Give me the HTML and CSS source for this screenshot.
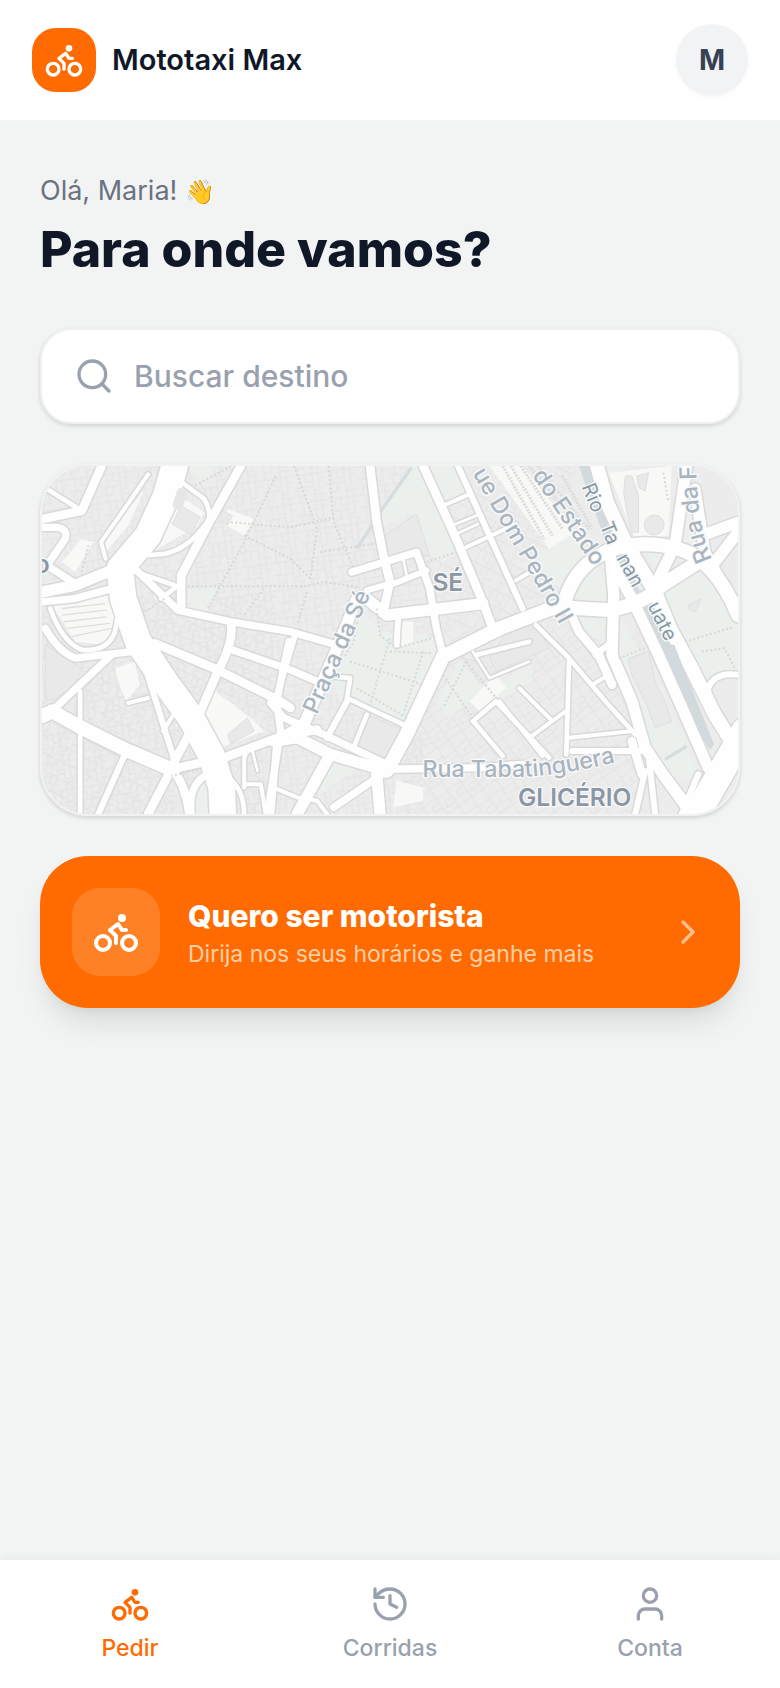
FILE: index.html
```html
<!DOCTYPE html>
<html lang="pt-BR">
<head>
<meta charset="utf-8">
<meta name="viewport" content="width=device-width, initial-scale=1">
<title>Mototaxi Max</title>
<link rel="stylesheet" href="styles.css">
</head>
<body>
<svg class="defs" aria-hidden="true">
  <symbol id="bike" viewBox="0 0 24 24"><circle cx="18.5" cy="17.5" r="3.5"/><circle cx="5.5" cy="17.5" r="3.5"/><circle cx="15" cy="5" r="1"/><path d="M12 17.5V14l-3-3 4-3 2 3h2"/></symbol>
</svg>
<div class="app">
  <header class="topbar">
    <a class="brand" href="#">
      <span class="brand-mark"><svg class="icon"><use href="#bike"/></svg></span>
      <span class="brand-name">Mototaxi Max</span>
    </a>
    <button class="avatar" type="button" aria-label="Perfil de Maria">M</button>
  </header>

  <main class="content">
    <div class="intro">
      <p class="greeting">Olá, Maria! <span class="wave">👋</span></p>
      <h1 class="title">Para onde vamos?</h1>
    </div>

    <label class="search">
      <svg class="icon" viewBox="0 0 24 24" aria-hidden="true"><circle cx="11" cy="11" r="8"/><path d="m21 21-4.3-4.3"/></svg>
      <input class="search-input" type="text" placeholder="Buscar destino" aria-label="Buscar destino">
    </label>

    <div class="map">
      <svg class="map-canvas" viewBox="30 30 2100 1050" preserveAspectRatio="xMidYMid slice" role="img" aria-label="Mapa do centro">
        <defs>
          <pattern id="lots" width="96" height="84" patternUnits="userSpaceOnUse" patternTransform="rotate(-8)">
            <path class="lot" d="M0 2H96M0 40H60V84M22 2V40M40 2V26H60M60 2V40M78 2V54H60M96 20H78M14 40V84M36 40V66H14M60 66H96M80 66V84"/>
          </pattern>
          <pattern id="lots-b" width="88" height="92" patternUnits="userSpaceOnUse" patternTransform="rotate(27)">
            <path class="lot" d="M0 2H88M0 46H88M16 2V46M34 2V30H52V2M52 30V46M70 2V46M24 46V92M24 68H44V46M62 46V92M62 76H88"/>
          </pattern>
          <pattern id="lots-c" width="90" height="90" patternUnits="userSpaceOnUse" patternTransform="rotate(55)">
            <path class="lot" d="M0 2H90M0 44H90M20 2V44M38 2V28H56M56 2V44M74 2V44M14 44V90M32 44V70H50V44M50 70V90M72 44V90"/>
          </pattern>
          <path id="line-tabatinguera" d="M1178 968H1470Q1620 965 1850 900"/>
          <path id="line-rua" d="M2052 312Q1998 200 2004 -60"/>
          <path id="line-praca" d="M860 782L1020 420"/>
          <g id="roads">
            <path class="w8" d="M1120 310L1130 360M1265 210L1340 180M1270 240L1345 205M1330 590L1380 670L1500 620M660 870L680 950"/>
            <path class="w12" d="M350 55L275 165L208 260L222 310M1240 150L1320 115M1310 275L1460 205M1460 375L1520 340M440 760L395 830M640 1000V910Q650 880 690 870M640 990H690L705 1080M740 1005L800 1030L860 1040L890 1080M1610 770L1500 850M1470 700L1570 800M1620 850L1810 830M1410 740L1540 905M1740 660L1690 690M290 745L350 730"/>
            <path class="w14" d="M30 90L150 165M440 70L520 130Q550 190 520 210Q470 280 400 295L340 300M300 345L430 390M440 390L390 430M145 710V1080M55 460Q90 560 150 585Q230 590 250 530L270 430M580 960Q640 1000 640 1080M910 665L960 670L950 730L1130 815M1010 780L970 880M1330 800L1400 740L1560 910M1335 805L1420 905M1520 510L1620 610L1730 740L1820 840M1620 620L1612 900M1340 600L1500 560M45 640"/>
            <path class="w18" d="M330 600L380 760L430 920M280 900L200 1080M1285 30L1380 240L1480 460M1105 480L1100 570M790 550L740 720M950 740L890 850M1080 390L1190 345M1010 405L1080 385M1630 890H1840M2040 760V700Q2060 650 2130 660M1700 600L1750 560M2010 960L1960 1080M1860 900L1880 1080M1850 950L1820 1080"/>
            <path class="w22" d="M30 215H75Q110 220 100 250L45 330L130 385M40 520Q80 590 130 610L300 590M240 600L70 760M310 340L440 465L600 500L780 530L920 570M590 580L780 645L860 680M775 560L738 740L750 830L710 1080M480 1080Q470 990 530 960M720 745L760 790L880 840L1070 930M740 850L720 1080M1070 950L910 1060M965 350L1160 290L1200 400L1220 520L1240 600M1070 945L1360 940L1480 930M30 440L130 430L240 400"/>
            <path class="w26" d="M210 30L150 165L30 190M630 30L540 190L450 360V460M370 565L560 645L740 735L780 760M600 505Q610 560 560 650L500 790L430 920M420 945L350 1080M420 945Q460 980 475 1080M420 945L580 910L740 850L860 825M1020 30L1040 200L1060 300L1080 380L1060 470M1180 30L1280 250L1360 440L1390 520M1610 440L1650 530L1710 600L1750 690M1900 950L2000 1080M1810 860L1840 960"/>
            <path class="w34" d="M30 410L130 390L240 345M1010 430L1070 480L1360 445M980 430L920 580L820 810L740 860M730 860L800 850L900 900L1070 950M900 900L800 1080M1040 960L1050 1080M1975 30L1940 270L1870 410M2000 100L2030 290L2090 400M2060 320L2130 230M2020 240L2130 200M1740 300L1810 430L1890 600L1970 780L2040 940M1745 300L1755 420L1750 600L1810 740L1850 880L1910 970L1990 1080"/>
            <path class="w42" d="M30 785L60 770L150 820L280 885L420 945M1070 950L1130 840L1240 605L1410 520L1580 455L1740 465Q1840 450 1900 390L2010 320M1610 430Q1640 330 1740 285Q1840 250 1950 280Q2060 310 2130 480M1705 30L1735 140L1790 260L1880 410L1925 520L1990 640L2060 780L2110 860"/>
            <path class="w80" d="M430 30L405 120L350 240L265 340L275 430L320 560L400 680L480 790L540 900L572 1000L576 1090M2150 830L2000 1090"/>
          </g>
        </defs>
        <rect class="land" x="30" y="30" width="2100" height="1050"/>
        <rect x="30" y="30" width="700" height="1050" fill="url(#lots)"/>
        <path fill="url(#lots-b)" d="M30 420H730V1080H30ZM1180 30H1640V520H1180Z"/>
        <path fill="url(#lots)" d="M730 30H1180V1080H730Z"/>
        <path fill="url(#lots-c)" d="M1180 520H1850V1080H1100Z"/>

        <path class="park" d="M1170 30L1310 280L1240 320L1180 290L1150 175L1060 210L1050 170L1150 30ZM1190 30H1290L1310 120L1240 140ZM970 450L1060 530L1220 545L1240 600L1130 810L930 730L900 660ZM465 30H560L520 90ZM465 400H560L530 465H475ZM1370 700L1510 630V680L1410 735ZM1290 620L1370 700L1260 790L1220 740ZM900 910L1000 930L910 990L860 1030ZM500 970L540 950V1080H490ZM1470 330L1640 230L1700 280L1620 410ZM1630 430L1700 330L1740 400V450ZM1770 480L1900 700L2020 980L1900 960L1760 640ZM1900 420L2010 340L2130 480V640L2040 680L1960 560ZM1940 270L1980 60L2010 290ZM1850 285L1920 300L1880 350ZM1650 490H1730V550Q1680 560 1650 490ZM1705 30H1800L1740 60Z"/>
        <path class="pale" d="M150 250L185 260L130 350L90 320ZM430 110L520 170L500 210L360 290ZM590 160L670 190L640 240L570 200ZM540 700L660 790L700 830L570 880L520 780ZM250 640L310 620L325 690L285 740L270 710ZM60 450L240 420L255 520L220 570L130 560ZM340 100L290 210L220 290L225 240ZM1380 30H1480L1640 230L1560 280ZM1740 50L1930 30L1920 240L1820 250ZM1100 980L1180 1000V1040L1090 1060ZM1320 740L1400 660L1430 700L1350 770ZM1110 500H1150V560L1110 575Z"/>
        <path class="building" d="M450 150L508 185L478 236L422 205ZM575 165L605 180L590 208L565 195ZM590 840L650 790L670 830L600 868ZM1065 240L1160 175L1200 300L1070 300ZM1010 780L1130 830L1060 915L980 880ZM1300 610L1360 625L1385 670L1350 685ZM1790 60H1810L1830 120V230H1810L1795 170L1785 110ZM1825 60L1860 50L1850 105L1830 95ZM1800 610L1860 590L1880 680L1910 740L1930 800L1880 820L1850 740L1810 660ZM1980 450L2020 430L2000 470L1985 465ZM1440 520L1520 500L1560 580L1400 650L1380 610ZM40 570L150 640L130 690L60 740L40 730Z"/>
        <circle class="building" cx="1877" cy="208" r="30"/>
        <path class="rail" d="M1420 30L1545 250M1445 30L1570 240M1475 30L1600 220M1500 30L1640 200M1525 30L1680 220M1600 60L1690 220"/>
        <path class="steps" d="M90 460L220 445M90 480L225 465M95 500L225 485M105 520L235 505M120 545L240 520"/>
        <path class="water" d="M1650 30H1690L1770 250L1830 400L1920 560L2058 870L2045 885L2010 830L1900 590L1790 380L1720 230Z"/>
        <path class="canal" d="M1145 35L1050 170L980 280M1910 915L1975 875"/>

        <use class="casing" href="#roads"/>
        <use class="surface" href="#roads"/>
        <path class="water" d="M1915 565L1938 570L2058 870L2045 885L2010 830L1990 780Z"/>
        <rect class="deck" x="430" y="95" width="32" height="68" rx="14" transform="rotate(18 446 130)"/>

        <path class="trail" d="M735 60L640 260L530 460M600 200L780 215L910 185M470 393H820L880 380L980 395M640 240L780 310L840 370M790 30L860 220L840 370M895 30L910 200L970 340M870 290L1030 265M700 400L640 480M830 410L800 510M990 450L970 560L940 610M1040 460L1050 540L1100 580L1220 545M960 620L1180 690M1080 550L1020 750M1180 590L1120 780M980 700L1130 790M1080 590L1210 595M1190 320L1280 290M1240 660L1330 790M1310 620L1240 760M1310 620L1400 730M150 350L170 270M1770 610L1860 575M1970 560L2120 515M2020 590L2090 580L2120 640M1905 50L1920 140M600 30L490 90M340 470L400 430M500 945L420 965"/>
        <g class="street-label">
          <text><textPath href="#line-praca">Praça da Sé</textPath></text>
          <text><textPath href="#line-tabatinguera">Rua Tabatinguera</textPath></text>
          <text transform="translate(1328 52) rotate(60)">ue Dom Pedro II</text>
          <text transform="translate(1508 58) rotate(56)">do Estado</text>
          <text><textPath href="#line-rua">Rua da F</textPath></text>
        </g>
        <g class="river-label">
          <text transform="translate(1658 92) rotate(68)">Rio</text>
          <text transform="translate(1712 208) rotate(68)">Ta</text>
          <text transform="translate(1762 308) rotate(61)">nan</text>
          <text transform="translate(1856 452) rotate(63)">uate</text>
        </g>
        <g class="district-label">
          <text x="1208" y="408">SÉ</text>
          <text x="1466" y="1055">GLICÉRIO</text>
          <text x="8" y="352">o</text>
        </g>
      </svg>
    </div>

    <a class="cta" href="#motorista">
      <span class="cta-tile"><svg class="icon icon-lg"><use href="#bike"/></svg></span>
      <span class="cta-text">
        <strong class="cta-title">Quero ser motorista</strong>
        <span class="cta-sub">Dirija nos seus horários e ganhe mais</span>
      </span>
      <svg class="icon chevron" viewBox="0 0 24 24" aria-hidden="true"><path d="m9 18 6-6-6-6"/></svg>
    </a>
  </main>

  <nav class="tabs">
    <a class="tab tab-active" href="#pedir"><svg class="icon"><use href="#bike"/></svg>Pedir</a>
    <a class="tab" href="#corridas"><svg class="icon" viewBox="0 0 24 24"><path d="M3 12a9 9 0 1 0 9-9 9.75 9.75 0 0 0-6.74 2.74L3 8"/><path d="M3 3v5h5"/><path d="M12 7v5l4 2"/></svg>Corridas</a>
    <a class="tab" href="#conta"><svg class="icon" viewBox="0 0 24 24"><path d="M19 21v-2a4 4 0 0 0-4-4H9a4 4 0 0 0-4 4v2"/><circle cx="12" cy="7" r="4"/></svg>Conta</a>
  </nav>
</div>
</body>
</html>
```
FILE: styles.css
```css
* { box-sizing: border-box; }

body {
  margin: 0;
  background: #f2f4f3;
  color: #101828;
  font-family: Inter, "Liberation Sans", sans-serif;
}

a { color: inherit; text-decoration: none; }

.defs { display: none; }

.app {
  display: flex;
  flex-direction: column;
  min-height: 100vh;
}

.icon {
  width: 40px;
  height: 40px;
  flex: none;
  fill: none;
  stroke: currentColor;
  stroke-width: 2;
  stroke-linecap: round;
  stroke-linejoin: round;
}

.icon-lg { width: 48px; height: 48px; }

.topbar {
  display: flex;
  align-items: center;
  justify-content: space-between;
  padding: 24px 32px;
  background: #fff;
}

.brand { display: flex; align-items: center; gap: 16px; }

.brand-mark {
  display: grid;
  place-items: center;
  width: 64px;
  height: 64px;
  border-radius: 24px;
  background: #ff6b00;
  color: #fff;
}

.brand-name { font-size: 29px; line-height: 40px; font-weight: 600; }

.avatar {
  width: 72px;
  height: 72px;
  padding: 0;
  border: 0;
  border-radius: 50%;
  background: #f1f3f5;
  box-shadow: 0 2px 6px rgba(0, 0, 0, 0.03);
  color: #364153;
  font: 700 28px/40px Inter, "Liberation Sans", sans-serif;
}

.content {
  flex: 1;
  display: flex;
  flex-direction: column;
  gap: 40px;
  padding: 48px 40px;
}

.intro { padding-bottom: 4px; }

.greeting {
  margin: 0;
  color: #6a7282;
  font-size: 27px;
  line-height: 46px;
}

.wave { font-size: 24px; line-height: 1; }

.title {
  margin: 0;
  font-size: 50px;
  line-height: 70px;
  font-weight: 800;
}

.search {
  display: flex;
  align-items: center;
  gap: 20px;
  padding: 24px 32px;
  border: 2px solid #eff1f1;
  border-radius: 32px;
  background: #fff;
  box-shadow: 0 2px 4px rgba(0, 0, 0, 0.14);
  color: #99a1af;
}

.search-input {
  flex: 1;
  min-width: 0;
  height: 44px;
  padding: 0;
  border: 0;
  outline: 0;
  background: none;
  color: #101828;
  font: 500 30px/44px Inter, "Liberation Sans", sans-serif;
}

.search-input::placeholder { color: #99a1af; opacity: 1; }

.map {
  overflow: hidden;
  aspect-ratio: 700 / 352;
  border: 2px solid #f1f3f3;
  border-radius: 48px;
  background: #ececec;
  box-shadow: 0 2px 4px rgba(0, 0, 0, 0.14);
}

.map-canvas { display: block; width: 100%; height: 100%; }

.land { fill: #ececec; }
.lot { fill: none; stroke: #e0e0e0; stroke-width: 2; }
.park { fill: #ebf0ed; }
.pale { fill: #f8f8f6; }
.building { fill: #e9e9e9; stroke: #dfdfdf; stroke-width: 3; }
.deck { fill: #e6e6e6; }
.water { fill: #d2dade; }
.canal { fill: none; stroke: #d5dde0; stroke-width: 10; }
.rail { fill: none; stroke: #dcdcdc; stroke-width: 9; stroke-dasharray: 6 4; }
.steps { fill: none; stroke: #dedede; stroke-width: 4; }
.trail {
  fill: none;
  stroke: #d6d9d7;
  stroke-width: 6;
  stroke-dasharray: 6 7;
}

.casing,
.surface { fill: none; stroke-linejoin: round; stroke-linecap: round; }
.casing { --edge: 9px; stroke: #d9d9d9; }
.surface { --edge: 0px; stroke: #fefefe; }
.w8 { stroke-width: calc(8px + var(--edge)); }
.w12 { stroke-width: calc(12px + var(--edge)); }
.w14 { stroke-width: calc(14px + var(--edge)); }
.w18 { stroke-width: calc(18px + var(--edge)); }
.w22 { stroke-width: calc(22px + var(--edge)); }
.w26 { stroke-width: calc(26px + var(--edge)); }
.w34 { stroke-width: calc(34px + var(--edge)); }
.w42 { stroke-width: calc(42px + var(--edge)); }
.w80 { stroke-width: calc(80px + var(--edge)); }

.street-label,
.river-label,
.district-label {
  paint-order: stroke;
  stroke: #f8f9fa;
  stroke-width: 8;
  stroke-linejoin: round;
  font-weight: 500;
}
.street-label { fill: #a9b4be; font-size: 70px; }
.river-label { fill: #8798a3; font-size: 60px; font-weight: 400; }
.district-label { fill: #8b97a3; font-size: 74px; font-weight: 600; }

.cta {
  display: flex;
  align-items: center;
  gap: 28px;
  padding: 32px;
  border-radius: 48px;
  background: #ff6b00;
  box-shadow: 0 20px 30px -6px rgba(0, 0, 0, 0.1), 0 8px 12px -8px rgba(0, 0, 0, 0.1);
  color: #fff;
}

.cta-tile {
  display: grid;
  place-items: center;
  width: 88px;
  height: 88px;
  border-radius: 28px;
  background: rgba(255, 255, 255, 0.15);
}

.cta-text { flex: 1; display: flex; flex-direction: column; padding-top: 4px; }
.cta-title { font-size: 30px; line-height: 40px; font-weight: 800; }
.cta-sub { color: #ffd0a8; font-size: 23px; line-height: 36px; }
.chevron { color: #ffc08f; }

.tabs {
  display: grid;
  grid-template-columns: repeat(3, 1fr);
  padding: 24px 0;
  background: #fff;
  box-shadow: 0 -2px 8px rgba(0, 0, 0, 0.04);
}

.tab {
  display: flex;
  flex-direction: column;
  align-items: center;
  gap: 8px;
  color: #99a1af;
  font-size: 23px;
  line-height: 32px;
  font-weight: 500;
}

.tab-active { color: #ff6b00; }
```
